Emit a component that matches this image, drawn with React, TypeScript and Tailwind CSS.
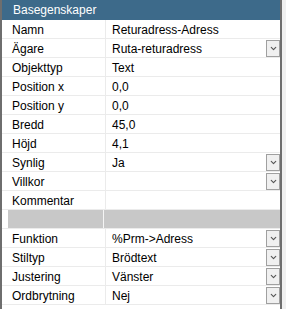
import { ChevronDown } from 'lucide-react';

type Row = {
  label: string;
  value: string;
  dropdown?: boolean;
};

const top: Row[] = [
  { label: 'Namn', value: 'Returadress-Adress' },
  { label: 'Ägare', value: 'Ruta-returadress', dropdown: true },
  { label: 'Objekttyp', value: 'Text' },
  { label: 'Position x', value: '0,0' },
  { label: 'Position y', value: '0,0' },
  { label: 'Bredd', value: '45,0' },
  { label: 'Höjd', value: '4,1' },
  { label: 'Synlig', value: 'Ja', dropdown: true },
  { label: 'Villkor', value: '', dropdown: true },
  { label: 'Kommentar', value: '' },
];

const bottom: Row[] = [
  { label: 'Funktion', value: '%Prm->Adress', dropdown: true },
  { label: 'Stiltyp', value: 'Brödtext', dropdown: true },
  { label: 'Justering', value: 'Vänster', dropdown: true },
  { label: 'Ordbrytning', value: 'Nej', dropdown: true },
];

function PropRow({ row }: { row: Row }) {
  return (
    <div className="grid h-[19px] grid-cols-[104px_1fr] border-b border-[#ebebeb]">
      <div className="flex items-center border-r border-[#ebebeb] pt-[1px] pl-[10px]">{row.label}</div>
      <div className="flex items-center justify-between pl-[6px]">
        <span className="pt-[1px]">{row.value}</span>
        {row.dropdown && (
          <span className="flex h-[17px] w-[14px] items-center justify-center border border-[#a0a0a0] bg-[#f0f0f0] text-[#555]">
            <ChevronDown size={9} strokeWidth={3} />
          </span>
        )}
      </div>
    </div>
  );
}

export default function App() {
  return (
    <div
      className="h-[309px] w-[286px] bg-[#f0f0f0] text-[12px] text-black"
      style={{ fontFamily: '"Liberation Sans", Arial, sans-serif' }}
    >
      <div className="h-full w-[282px] border-x-2 border-[#6e6e6e] bg-white">
        <div className="flex h-[20px] items-center bg-[#3d6a8a] pl-[11px] text-white">Basegenskaper</div>
        {top.map((r) => (
          <PropRow key={r.label} row={r} />
        ))}
        <div className="grid h-[19px] grid-cols-[96px_1fr] border-b border-[#ebebeb] pl-[6px]">
          <div className="border-r border-[#f5f5f5] bg-[#c8c8c8]" />
          <div className="bg-[#c8c8c8]" />
        </div>
        {bottom.map((r) => (
          <PropRow key={r.label} row={r} />
        ))}
      </div>
    </div>
  );
}
